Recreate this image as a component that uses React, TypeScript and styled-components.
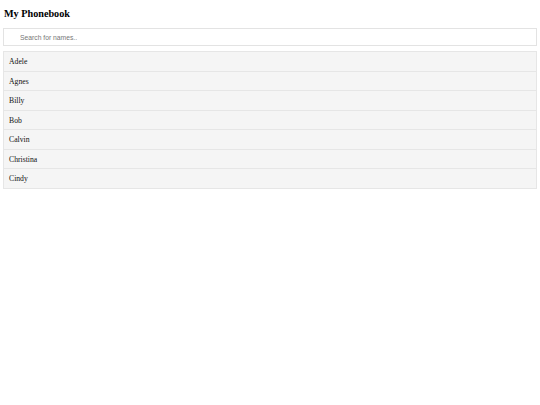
import React, { useState } from 'react';
import styled, { createGlobalStyle } from 'styled-components';

const GlobalStyle = createGlobalStyle`
  html, body {
    margin: 0;
    padding: 0;
    background: #ffffff;
  }
  body {
    font-family: 'Liberation Serif', 'Times New Roman', serif;
  }
`;

const Page = styled.div`
  padding: 0 3px;
`;

const Title = styled.h2`
  margin: 0;
  padding-top: 8.4px;
  margin-bottom: 8.4px;
  font-size: 10.2px;
  line-height: 11.6px;
  font-weight: bold;
  color: #000;
  padding-left: 1px;
`;

const SearchInput = styled.input`
  display: block;
  box-sizing: border-box;
  width: 100%;
  height: 18px;
  margin: 0 0 5px 0;
  padding: 0 8px 0 16px;
  border: 1px solid #e3e3e3;
  outline: none;
  font-family: 'Liberation Sans', Arial, sans-serif;
  font-size: 6.75px;
  color: #333;
  &::placeholder {
    color: #777;
  }
`;

const List = styled.ul`
  list-style: none;
  margin: 0;
  padding: 0;
  border-top: 1px solid #e6e6e6;
`;

const Item = styled.li`
  box-sizing: border-box;
  height: 20px;
  display: flex;
  align-items: center;
  padding-left: 5px;
  border: 1px solid #e6e6e6;
  border-top: none;
  background: #f5f5f5;
  font-size: 7.7px;
  color: #111;
  &:nth-child(even) {
    height: 19px;
  }
`;

const names = ['Adele', 'Agnes', 'Billy', 'Bob', 'Calvin', 'Christina', 'Cindy'];

const App: React.FC = () => {
  const [query, setQuery] = useState('');
  const shown = names.filter(n => n.toUpperCase().includes(query.toUpperCase()));
  return (
    <React.Fragment>
      <GlobalStyle />
      <Page>
        <Title>My Phonebook</Title>
        <SearchInput
          type="text"
          placeholder="Search for names.."
          value={query}
          onChange={e => setQuery(e.target.value)}
        />
        <List>
          {shown.map(n => (
            <Item key={n}>{n}</Item>
          ))}
        </List>
      </Page>
    </React.Fragment>
  );
};

export default App;
